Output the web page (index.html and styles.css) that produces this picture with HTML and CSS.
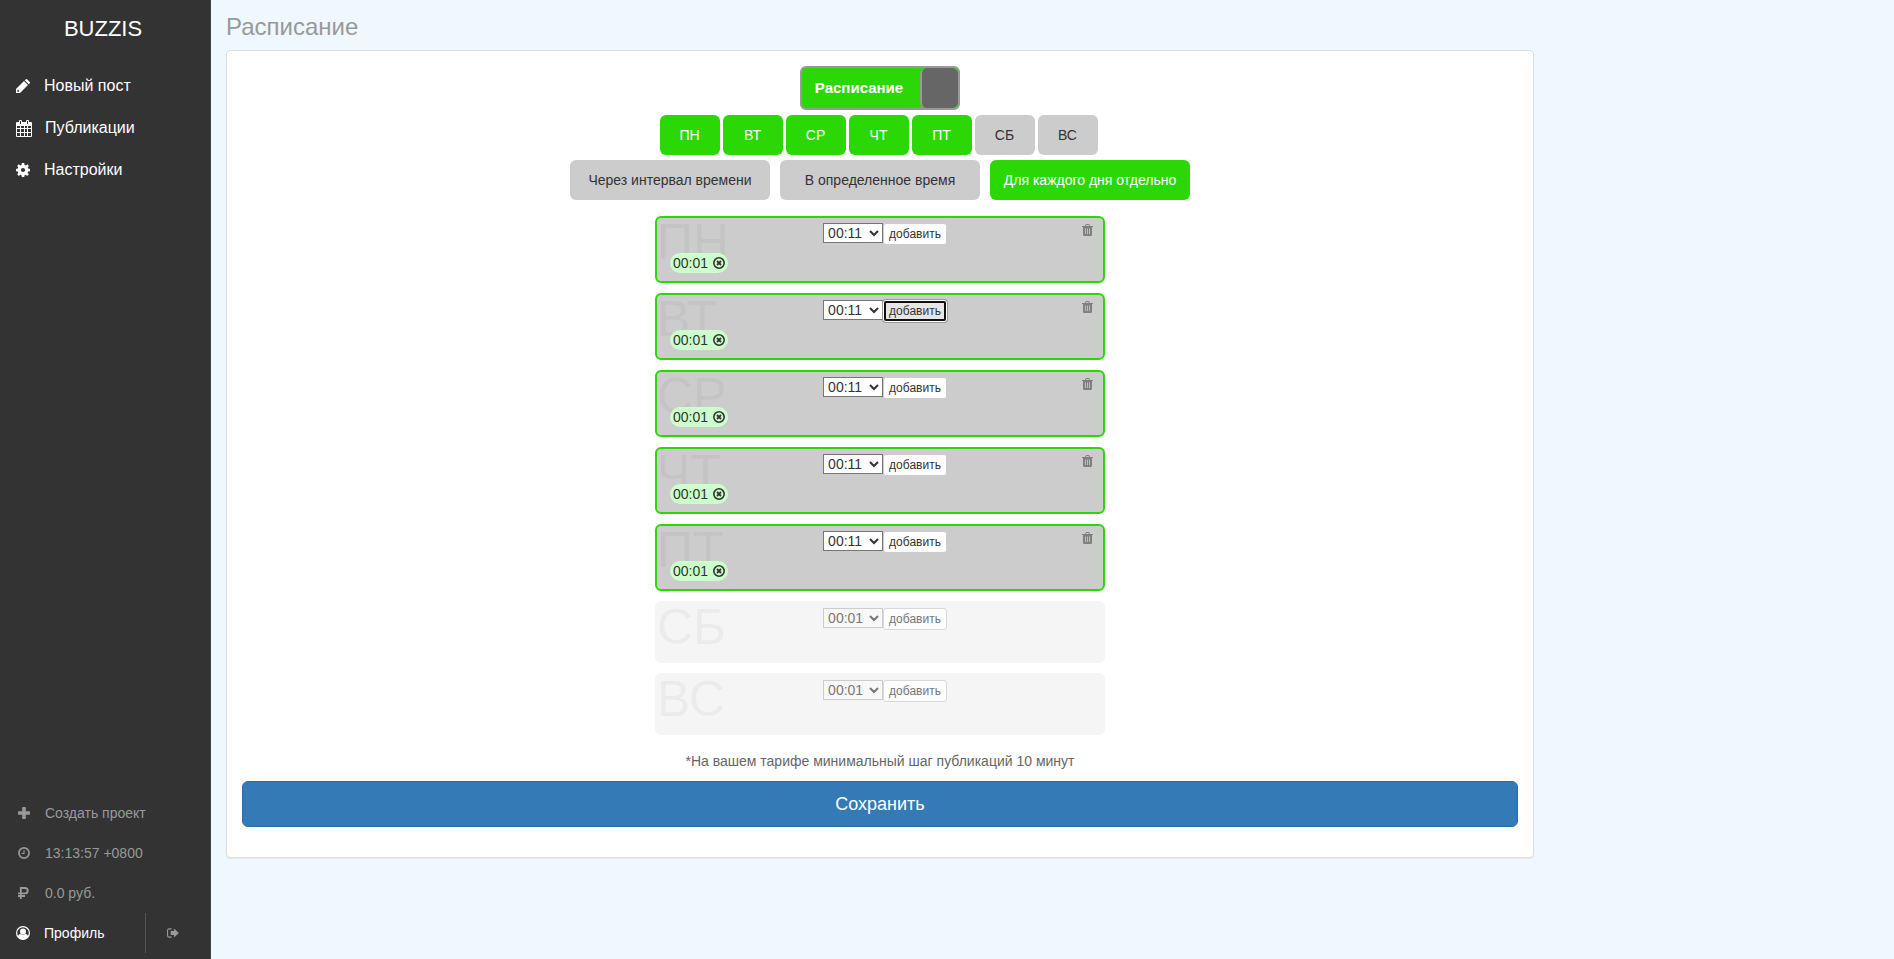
FILE: index.html
```html
<!DOCTYPE html>
<html lang="ru">

<head>
    <meta charset="UTF-8">
    <meta name="viewport" content="width=device-width, initial-scale=1.0">
    <title>BUZZIS - Расписание</title>
    <link rel="stylesheet" href="styles.css">
</head>

<body>
    <svg class="sprite">
        <symbol id="i-pencil" viewBox="0 0 14 14">
            <path d="M0 14V10L8 2L12 6L4 14zM1.300 11.200v1.500h1.500l.6-.6l-1.500-1.500z" fill-rule="evenodd" />
            <path d="M8.700 1.300L9.600.4Q10.500-.3 11.300.4L13.600 2.700Q14.300 3.500 13.600 4.400L12.700 5.300z" />
        </symbol>
        <symbol id="i-calendar" viewBox="0 0 16 17">
            <path fill-rule="evenodd" d="M1 2h2V1q0-1 1-1h1q1 0 1 1v1h4V1q0-1 1-1h1q1 0 1 1v1h2q1 0 1 1v13q0 1-1 1H1q-1 0-1-1V3q0-1 1-1zM4 1v3h1V1zM11 1v3h1V1zM1 6v2h3V6zM5 6v2h3V6zM9 6v2h2V6zM12 6v2h3V6zM1 9v3h3V9zM5 9v3h3V9zM9 9v3h2V9zM12 9v3h3V9zM1 13v3h3v-3zM5 13v3h3v-3zM9 13v3h2v-3zM12 13v3h3v-3z" />
        </symbol>
        <symbol id="i-gear" viewBox="0 0 14 14">
            <path fill-rule="evenodd" d="M5.800 0h2.400l.4 1.900l1.100.5L11.400 1.300L12.900 2.900L11.700 4.400l.5 1.200L14 5.900v2.300l-1.900.3l-.5 1.200L12.800 11.300L11.200 12.900L9.700 11.700l-1.100.5L8.200 14H5.800l-.3-1.800l-1.200-.5L2.800 12.900L1.200 11.300L2.300 9.700l-.5-1.200L0 8.200V5.900l1.800-.3l.5-1.200L1.200 2.900L2.800 1.300L4.300 2.400l1.200-.5zM7 4.900A2.100 2.100 0 1 0 7 9.100A2.100 2.100 0 1 0 7 4.900z" />
        </symbol>
        <symbol id="i-plus" viewBox="0 0 12 12">
            <path d="M4.200.7q0-.7.700-.7h2.200q.7 0 .7.700V4.200h3.500q.7 0 .7.700v2.200q0 .7-.7.700H7.800v3.500q0 .7-.7.700H4.900q-.7 0-.7-.7V7.800H.7Q0 7.800 0 7.100V4.900q0-.7.700-.7h3.500z" />
        </symbol>
        <symbol id="i-clock" viewBox="0 0 12 12">
            <circle cx="6" cy="6" r="5.100" fill="none" stroke="currentColor" stroke-width="1.700" />
            <path d="M6 3v3.500H3.500" fill="none" stroke="currentColor" stroke-width="1.100" />
        </symbol>
        <symbol id="i-ruble" viewBox="0 0 12 12">
            <path d="M2.800 12V1H7a2.600 2.600 0 0 1 0 5.400H0M0 9H7" fill="none" stroke="currentColor" stroke-width="1.900" />
        </symbol>
        <symbol id="i-user" viewBox="0 0 14 14">
            <circle cx="7" cy="7" r="6.400" fill="none" stroke="currentColor" stroke-width="1.200" />
            <circle cx="7" cy="5.600" r="3" />
            <path d="M1.800 10.800Q2.200 8.200 4.400 7.800Q7 9.800 9.600 7.800Q11.800 8.200 12.200 10.800Q10 13.500 7 13.500T1.800 10.800z" />
        </symbol>
        <symbol id="i-exit" viewBox="0 0 13 11">
            <path d="M5 1H2.500Q.6 1 .6 2.800V8.200Q.6 10 2.500 10H5" fill="none" stroke="currentColor" stroke-width="1.200" />
            <path d="M7.500.5L12.900 5.500L7.500 10.500V7.700H4V3.300H7.500z" />
        </symbol>
        <symbol id="i-trash" viewBox="0 0 11 12">
            <path fill-rule="evenodd" d="M0 2h3L3.600.6Q3.900 0 4.500 0h2q.6 0 .9.600L8 2h3v1h-1v7.700Q10 12 8.700 12H2.300Q1 12 1 10.700V3H0zM4 2h3L6.600 1H4.400zM3 4.500v5.500h.8V4.500zM5.100 4.500v5.500h.8V4.500zM7.200 4.500v5.500H8V4.500z" />
        </symbol>
        <symbol id="i-close" viewBox="0 0 12 12">
            <circle cx="6" cy="6" r="5.200" fill="none" stroke="currentColor" stroke-width="1.600" />
            <path d="M4 4L8 8M8 4L4 8" fill="none" stroke="currentColor" stroke-width="1.800" />
        </symbol>
    </svg>

    <aside class="sidebar">
        <a class="brand" href="#">BUZZIS</a>
        <nav class="menu">
            <a href="#"><svg class="icon"><use href="#i-pencil" /></svg>Новый пост</a>
            <a href="#"><svg class="icon tall"><use href="#i-calendar" /></svg>Публикации</a>
            <a href="#"><svg class="icon"><use href="#i-gear" /></svg>Настройки</a>
        </nav>
        <div class="bottom">
            <a href="#"><svg class="icon small"><use href="#i-plus" /></svg>Создать проект</a>
            <a href="#"><svg class="icon small"><use href="#i-clock" /></svg>13:13:57 +0800</a>
            <a href="#"><svg class="icon small"><use href="#i-ruble" /></svg>0.0 руб.</a>
            <div class="user">
                <a class="profile" href="#"><svg class="icon"><use href="#i-user" /></svg>Профиль</a>
                <a class="exit" href="#" aria-label="Выход"><svg class="icon small"><use href="#i-exit" /></svg></a>
            </div>
        </div>
    </aside>

    <main class="content">
        <h1>Расписание</h1>
        <form class="panel" onsubmit="return false">
            <button class="toggle" type="button"><span class="toggle-text">Расписание</span><span class="toggle-knob"></span></button>

            <div class="week">
                <button class="choice on" type="button">ПН</button>
                <button class="choice on" type="button">ВТ</button>
                <button class="choice on" type="button">СР</button>
                <button class="choice on" type="button">ЧТ</button>
                <button class="choice on" type="button">ПТ</button>
                <button class="choice" type="button">СБ</button>
                <button class="choice" type="button">ВС</button>
            </div>

            <div class="modes">
                <button class="choice" type="button">Через интервал времени</button>
                <button class="choice" type="button">В определенное время</button>
                <button class="choice on" type="button">Для каждого дня отдельно</button>
            </div>

            <div class="days">
                <section class="day">
                    <span class="day-name">ПН</span>
                    <div class="add">
                        <select aria-label="Время, ПН"><option>00:11</option></select><button type="button">добавить</button>
                    </div>
                    <button class="trash" type="button" aria-label="Очистить"><svg><use href="#i-trash" /></svg></button>
                    <div class="times">
                        <span class="time">00:01 <button type="button" aria-label="Удалить"><svg><use href="#i-close" /></svg></button></span>
                    </div>
                </section>
                <section class="day">
                    <span class="day-name">ВТ</span>
                    <div class="add">
                        <select aria-label="Время, ВТ"><option>00:11</option></select><button class="focused" type="button">добавить</button>
                    </div>
                    <button class="trash" type="button" aria-label="Очистить"><svg><use href="#i-trash" /></svg></button>
                    <div class="times">
                        <span class="time">00:01 <button type="button" aria-label="Удалить"><svg><use href="#i-close" /></svg></button></span>
                    </div>
                </section>
                <section class="day">
                    <span class="day-name">СР</span>
                    <div class="add">
                        <select aria-label="Время, СР"><option>00:11</option></select><button type="button">добавить</button>
                    </div>
                    <button class="trash" type="button" aria-label="Очистить"><svg><use href="#i-trash" /></svg></button>
                    <div class="times">
                        <span class="time">00:01 <button type="button" aria-label="Удалить"><svg><use href="#i-close" /></svg></button></span>
                    </div>
                </section>
                <section class="day">
                    <span class="day-name">ЧТ</span>
                    <div class="add">
                        <select aria-label="Время, ЧТ"><option>00:11</option></select><button type="button">добавить</button>
                    </div>
                    <button class="trash" type="button" aria-label="Очистить"><svg><use href="#i-trash" /></svg></button>
                    <div class="times">
                        <span class="time">00:01 <button type="button" aria-label="Удалить"><svg><use href="#i-close" /></svg></button></span>
                    </div>
                </section>
                <section class="day">
                    <span class="day-name">ПТ</span>
                    <div class="add">
                        <select aria-label="Время, ПТ"><option>00:11</option></select><button type="button">добавить</button>
                    </div>
                    <button class="trash" type="button" aria-label="Очистить"><svg><use href="#i-trash" /></svg></button>
                    <div class="times">
                        <span class="time">00:01 <button type="button" aria-label="Удалить"><svg><use href="#i-close" /></svg></button></span>
                    </div>
                </section>
                <section class="day off">
                    <span class="day-name">СБ</span>
                    <div class="add">
                        <select aria-label="Время, СБ" disabled><option>00:01</option></select><button type="button" disabled>добавить</button>
                    </div>
                </section>
                <section class="day off">
                    <span class="day-name">ВС</span>
                    <div class="add">
                        <select aria-label="Время, ВС" disabled><option>00:01</option></select><button type="button" disabled>добавить</button>
                    </div>
                </section>
            </div>

            <p class="note">*На вашем тарифе минимальный шаг публикаций 10 минут</p>
            <button class="save" type="submit">Сохранить</button>
        </form>
    </main>
</body>

</html>
```
FILE: styles.css
```css
* {
    box-sizing: border-box;
}

body {
    margin: 0;
    display: flex;
    min-height: 100vh;
    background: #eff7ff;
    color: #333;
    font-family: "Liberation Sans", Arial, sans-serif;
    font-size: 14px;
    line-height: 20px;
}

a {
    text-decoration: none;
}

button,
select {
    font-family: inherit;
    color: inherit;
}

button {
    cursor: pointer;
}

.sprite {
    position: absolute;
    width: 0;
    height: 0;
}

.icon {
    width: 14px;
    height: 14px;
    margin-right: 14px;
    fill: currentColor;
}

.icon.tall {
    width: 16px;
    height: 17px;
    margin-right: 13px;
}

.icon.small {
    width: 12px;
    height: 12px;
    margin: 0 15px 0 2px;
}

/* sidebar */
.sidebar {
    display: flex;
    flex-direction: column;
    flex: 0 0 211px;
    background: #333;
    border-right: 1px solid #444;
}

.brand {
    padding: 14px 10px 14px 6px;
    color: #fff;
    font-size: 22px;
    line-height: 30px;
    text-align: center;
}

.menu {
    padding-top: 7px;
}

.menu a,
.bottom a {
    display: flex;
    align-items: center;
    height: 42px;
    padding-left: 16px;
    color: #fff;
    font-size: 16px;
}

.bottom {
    margin-top: auto;
    padding-bottom: 6px;
}

.bottom a {
    height: 40px;
    color: #999;
    font-size: 14px;
}

.user {
    display: flex;
}

.bottom .profile {
    flex: 0 0 145px;
    color: #fff;
}

.bottom .exit {
    flex: 1;
    padding-left: 19px;
    border-left: 1px solid #555;
}

/* content */
.content {
    flex: 1;
    max-width: 1338px;
    padding: 0 15px;
}

h1 {
    margin: 12px 0 8px;
    color: #999;
    font-size: 24px;
    font-weight: normal;
    line-height: 30px;
}

.panel {
    display: flex;
    flex-direction: column;
    align-items: center;
    padding: 15px 15px 30px;
    background: #fff;
    border: 1px solid #ddd;
    border-radius: 4px;
    box-shadow: 0 1px 1px rgba(0, 0, 0, 0.05);
}

.toggle {
    display: flex;
    width: 160px;
    height: 44px;
    padding: 0;
    overflow: hidden;
    background: #2bd806;
    border: 2px solid #999;
    border-radius: 6px;
    color: #fff;
    font-size: 15px;
    font-weight: bold;
}

.toggle-text {
    flex: 1;
    padding-right: 4px;
    line-height: 40px;
}

.toggle-knob {
    width: 38px;
    height: 40px;
    background: #666;
    border-left: 2px solid #999;
    border-radius: 6px;
}

.choice {
    height: 40px;
    padding: 0;
    background: #ccc;
    border: 0;
    border-radius: 6px;
    font-size: 14px;
}

.choice.on {
    background: #2bd806;
    color: #fff;
}

.week,
.modes {
    display: flex;
    margin-top: 5px;
}

.week .choice {
    width: 60px;
    margin-right: 3px;
}

.modes {
    gap: 10px;
}

.modes .choice {
    width: 200px;
}

/* one card for each day of the week */
.days {
    display: flex;
    flex-direction: column;
    gap: 10px;
    width: 450px;
    margin-top: 16px;
}

.day {
    position: relative;
    min-height: 67px;
    padding: 5px 10px 8px;
    background: #ccc;
    border: 2px solid #2bd806;
    border-radius: 6px;
}

.day.off {
    min-height: 62px;
    background: #f5f5f5;
    border-color: #f5f5f5;
    color: #777;
}

.day-name {
    position: absolute;
    top: -1px;
    left: 0;
    color: rgba(0, 0, 0, 0.04);
    font-size: 50px;
    line-height: 50px;
}

.add {
    display: flex;
    align-items: flex-start;
    justify-content: center;
    padding-left: 10px;
}

.add select {
    width: 60px;
    height: 20px;
    padding: 0;
    background-color: #fff;
    border: 1px solid #767676;
    border-radius: 0;
    font-size: 14px;
}

.add button {
    height: 22px;
    padding: 0 5px;
    background: #fff;
    border: 1px solid #ccc;
    border-radius: 3px;
    font-size: 12px;
    line-height: 20px;
}

.add .focused {
    background: #e6e6e6;
    border-color: #fff;
    outline: 2px solid #101010;
    outline-offset: -3px;
    box-shadow: 0 0 0 1px #999;
}

.off select {
    background-color: #f8f8f8;
    border-color: #ccc;
    opacity: 1;
}

.off .add button {
    background: #fcfcfc;
    border-color: #d8d8d8;
}

.trash {
    position: absolute;
    top: 6px;
    right: 10px;
    padding: 0;
    background: none;
    border: 0;
    color: #808080;
}

.trash svg {
    display: block;
    width: 11px;
    height: 12px;
    fill: currentColor;
}

.times {
    position: relative;
    display: flex;
    padding: 8px 3px 0;
}

.time {
    display: flex;
    align-items: center;
    gap: 5px;
    padding: 0 3px;
    background: #cfc;
    border-radius: 10px;
}

.time button {
    padding: 0;
    background: none;
    border: 0;
}

.time svg {
    display: block;
    width: 12px;
    height: 12px;
}

.note {
    margin: 16px 0 10px;
    color: #666;
}

.save {
    align-self: stretch;
    height: 46px;
    background: #337ab7;
    border: 1px solid #2e6da4;
    border-radius: 6px;
    color: #fff;
    font-size: 18px;
}
```
